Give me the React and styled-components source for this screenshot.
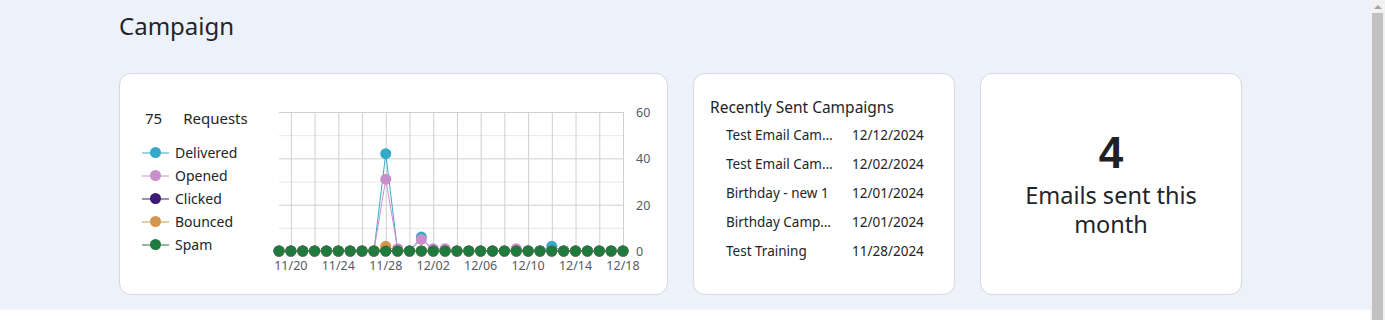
import React from "react";
import styled, { createGlobalStyle } from "styled-components";

const GlobalStyle = createGlobalStyle`
  html, body {
    margin: 0;
    padding: 0;
    background: #fff;
  }
  body {
    font-family: "Noto Sans", "Liberation Sans", sans-serif;
    color: #212529;
  }
`;

const COLORS = {
  delivered: "#35a9c8",
  opened: "#c98fcb",
  clicked: "#3d1a78",
  bounced: "#d4954f",
  spam: "#217a3d",
};

const DAYS = 30;
const START = new Date(2024, 10, 19);

const series = [
  { key: "delivered", label: "Delivered", values: { 9: 42, 12: 6, 23: 2 } },
  { key: "opened", label: "Opened", values: { 9: 31, 10: 1, 12: 5, 13: 1, 14: 1, 20: 1 } },
  { key: "clicked", label: "Clicked", values: {} },
  { key: "bounced", label: "Bounced", values: { 9: 2 } },
  { key: "spam", label: "Spam", values: {} },
];

const campaigns = [
  { name: "Test Email Campaign", date: "12/12/2024" },
  { name: "Test Email Campaign 2", date: "12/02/2024" },
  { name: "Birthday - new 1", date: "12/01/2024" },
  { name: "Birthday Campaign", date: "12/01/2024" },
  { name: "Test Training", date: "11/28/2024" },
];

// chart geometry (svg local coordinates)
const X0 = 9;
const X1 = 353;
const YTOP = 12;
const YBOT = 151;
const MAX = 60;

const xAt = (i) => X0 + ((X1 - X0) * i) / (DAYS - 1);
const yAt = (v) => YBOT - ((YBOT - YTOP) * v) / MAX;

const dayLabel = (i) => {
  const d = new Date(START);
  d.setDate(d.getDate() + i);
  return `${String(d.getMonth() + 1).padStart(2, "0")}/${String(d.getDate()).padStart(2, "0")}`;
};

function Chart() {
  const idx = Array.from({ length: DAYS }, (_, i) => i);
  return (
    <ChartSvg width="392" height="175" viewBox="0 0 392 175">
      {[0, 10, 20, 30, 40, 50, 60].map((v) => (
        <line
          key={`h${v}`}
          x1={X0}
          x2={X1}
          y1={yAt(v) + 0.5}
          y2={yAt(v) + 0.5}
          stroke={v % 20 === 0 ? "#cfcfcf" : "#e6e6e6"}
          strokeWidth="1"
        />
      ))}
      {idx
        .filter((i) => i % 2 === 1)
        .map((i) => (
          <line
            key={`v${i}`}
            x1={xAt(i) + 0.5}
            x2={xAt(i) + 0.5}
            y1={YTOP}
            y2={YBOT}
            stroke="#cfcfcf"
            strokeWidth="1"
          />
        ))}
      {[0, 20, 40, 60].map((v) => (
        <AxisText key={`y${v}`} x="366" y={yAt(v) + 5}>
          {v}
        </AxisText>
      ))}
      {idx
        .filter((i) => i % 4 === 1)
        .map((i) => (
          <AxisText key={`x${i}`} x={xAt(i)} y="170" textAnchor="middle">
            {dayLabel(i)}
          </AxisText>
        ))}
      {series.map((s) => {
        const pts = idx.map((i) => [xAt(i), yAt(s.values[i] || 0)]);
        return (
          <g key={s.key}>
            <polyline
              points={pts.map((p) => p.join(",")).join(" ")}
              fill="none"
              stroke={COLORS[s.key]}
              strokeWidth="1"
            />
            {pts.map(([x, y], i) => (
              <circle key={i} cx={x} cy={y} r="5.5" fill={COLORS[s.key]} />
            ))}
          </g>
        );
      })}
    </ChartSvg>
  );
}

export default function App() {
  return (
    <>
      <GlobalStyle />
      <Page>
        <Title>Campaign</Title>
        <Cards>
          <Card>
            <ChartCard>
              <Legend>
                <Summary>
                  <span>75</span>
                  <span>Requests</span>
                </Summary>
                {series.map((s) => (
                  <LegendItem key={s.key}>
                    <Swatch $color={COLORS[s.key]} />
                    {s.label}
                  </LegendItem>
                ))}
              </Legend>
              <Chart />
            </ChartCard>
          </Card>

          <Card>
            <ListCard>
              <CardHeading>Recently Sent Campaigns</CardHeading>
              <CampaignList>
                {campaigns.map((c, i) => (
                  <React.Fragment key={i}>
                    <CampaignName>{c.name}</CampaignName>
                    <span>{c.date}</span>
                  </React.Fragment>
                ))}
              </CampaignList>
            </ListCard>
          </Card>

          <Card>
            <StatCard>
              <BigNumber>4</BigNumber>
              <StatLabel>Emails sent this month</StatLabel>
            </StatCard>
          </Card>
        </Cards>
      </Page>
      <Footer />
      <ScrollTrack>
        <ScrollArrow />
        <ScrollThumb />
      </ScrollTrack>
    </>
  );
}

const Page = styled.main`
  background: #edf2fa;
  height: 310px;
  box-sizing: border-box;
  padding: 11px 0 0 119px;
`;

const Title = styled.h1`
  margin: 0;
  font-size: 24px;
  font-weight: 400;
  line-height: 30px;
  color: #212529;
`;

const Cards = styled.div`
  display: grid;
  grid-template-columns: 549px 262px 262px;
  column-gap: 25px;
  margin-top: 32px;
`;

const Card = styled.section`
  background: #fff;
  border: 1px solid #d6d9de;
  border-radius: 12px;
  height: 222px;
  box-sizing: border-box;
  overflow: hidden;
`;

const ChartCard = styled.div`
  display: flex;
  align-items: flex-start;
  padding: 26px 0 0 22px;
`;

const Legend = styled.div`
  width: 128px;
  margin-top: 8px;
  font-size: 14px;
`;

const Summary = styled.div`
  display: flex;
  gap: 21px;
  padding-left: 3px;
  font-size: 15px;
  line-height: 20px;
  margin-bottom: 13px;
`;

const LegendItem = styled.div`
  display: flex;
  align-items: center;
  height: 23px;
  gap: 6px;
`;

const Swatch = styled.span`
  position: relative;
  width: 27px;
  height: 2px;
  background: ${(p) => p.$color}80;

  &::after {
    content: "";
    position: absolute;
    left: 8px;
    top: -4.5px;
    width: 11px;
    height: 11px;
    border-radius: 50%;
    background: ${(p) => p.$color};
  }
`;

const ChartSvg = styled.svg`
  display: block;
  overflow: visible;
`;

const AxisText = styled.text`
  font-family: "Noto Sans", "Liberation Sans", sans-serif;
  font-size: 12.5px;
  fill: #555a66;
`;

const ListCard = styled.div`
  padding: 22px 16px 0 16px;
`;

const CardHeading = styled.h2`
  margin: 0;
  font-size: 15.5px;
  font-weight: 400;
  line-height: 22px;
`;

const CampaignList = styled.div`
  display: grid;
  grid-template-columns: 110px auto;
  column-gap: 16px;
  grid-auto-rows: 29px;
  align-items: center;
  padding: 2px 0 0 16px;
  font-size: 13.5px;
`;

const CampaignName = styled.span`
  white-space: nowrap;
  overflow: hidden;
  text-overflow: ellipsis;
`;

const StatCard = styled.div`
  height: 100%;
  display: flex;
  flex-direction: column;
  align-items: center;
  justify-content: center;
  text-align: center;
  padding: 0 30px 16px;
`;

const BigNumber = styled.div`
  font-family: "Liberation Sans", Arial, sans-serif;
  font-weight: 700;
  font-size: 44px;
  line-height: 48px;
  color: #1e2124;
`;

const StatLabel = styled.div`
  font-size: 23.5px;
  line-height: 29px;
  margin-top: 4px;
`;

const Footer = styled.div`
  height: 10px;
  background: #fff;
`;

const ScrollTrack = styled.div`
  position: fixed;
  top: 0;
  right: 0;
  bottom: 0;
  width: 15px;
  background: #f1f1f1;
  display: flex;
  flex-direction: column;
  align-items: center;
`;

const ScrollArrow = styled.div`
  margin-top: 5px;
  width: 0;
  height: 0;
  border-left: 4px solid transparent;
  border-right: 4px solid transparent;
  border-bottom: 4px solid #a3a3a3;
`;

const ScrollThumb = styled.div`
  margin-top: 4px;
  flex: 1;
  width: 11px;
  background: #c1c1c1;
`;
